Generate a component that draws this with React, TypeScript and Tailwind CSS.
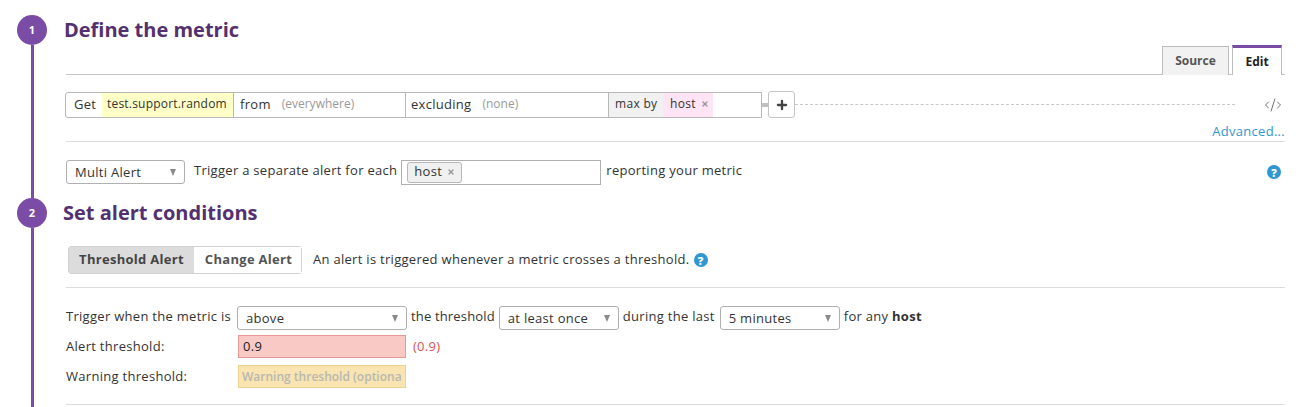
import React from 'react';
import { Plus, X, CodeXml } from 'lucide-react';

const Caret = () => <span className="ml-auto w-0 h-0 border-l-[3.5px] border-r-[3.5px] border-t-[7px] border-l-transparent border-r-transparent border-t-[#8a8a8a]" />;

const Select: React.FC<{ label: string; width: string; pad?: string }> = ({ label, width, pad = 'pl-2 pr-[8px]' }) => (
  <div className={`flex items-center h-6 rounded-[3px] border border-[#b0b0b0] bg-white text-[#333] ${width} ${pad}`}>
    <span className="pt-0.5">{label}</span>
    <Caret />
  </div>
);

const Help = () => (
  <span className="flex items-center justify-center w-[14px] h-[14px] rounded-full bg-[#2f97d1] text-white text-[11px] font-extrabold leading-none tracking-normal">?</span>
);

const StepRail: React.FC<{ n: number }> = ({ n }) => (
  <div className="flex flex-col items-center w-[30px] ml-[17px] mr-[19px] shrink-0">
    <div className="flex items-center justify-center w-[30px] h-[30px] rounded-full bg-[#7b4ca5] text-white text-[11px] font-bold tracking-normal">{n}</div>
    <div className="flex-1 w-[3px] bg-[#7b4ca5]" />
  </div>
);

const Divider: React.FC<{ className: string }> = ({ className }) => <div className={`h-px bg-[#dcdcdc] w-[1219px] ${className}`} />;

const App: React.FC = () => {
  return (
    <div className="w-[1306px] h-[407px] overflow-hidden bg-white text-[13px] tracking-[0.29px] text-[#333] font-['Open_Sans',sans-serif]">
      <div className="flex h-[198px] pt-[15px]">
        <StepRail n={1} />
        <div className="flex-1">
          <h2 className="h-[30px] -ml-[2px] text-[20px] leading-[30px] font-bold tracking-normal text-[#53306f]">Define the metric</h2>

          <div className="flex justify-end gap-[3px] h-[29px] pr-[3px] w-[1216px] border-b border-[#c4c4c4] box-content tracking-normal">
            <div className="flex items-center justify-center w-[67px] h-[29px] mt-px border border-b-0 border-[#bcbcbc] bg-[#f2f2f2] font-bold text-[12px] text-[#555]">Source</div>
            <div className="flex items-center justify-center w-[50px] h-[30px] border-x border-[#bcbcbc] border-t-[3px] border-t-[#7b4ca5] bg-white font-bold text-[12px] text-[#222]">Edit</div>
          </div>

          <div className="flex items-center w-[1220px] mt-[16px] -ml-px">
            <div className="flex h-[26px] w-[697px] rounded-l-[3px] border border-[#b8b8b8] leading-[22px]">
              <span className="w-[36px] pl-2">Get</span>
              <span className="w-[131px] pl-[5px] bg-[#ffffc8] text-[12px] tracking-[0.2px]">test.support.random</span>
              <div className="flex w-[172px] border-l border-[#b8b8b8] pl-[6px]">
                <span>from</span>
                <span className="ml-[11px] text-[12px] tracking-normal text-[#999]">(everywhere)</span>
              </div>
              <div className="flex w-[203px] border-l border-[#b8b8b8] pl-[5px]">
                <span>excluding</span>
                <span className="ml-[11px] text-[12px] tracking-normal text-[#999]">(none)</span>
              </div>
              <span className="w-[55px] pl-[6px] border-l border-[#b8b8b8] bg-[#f1f1f1] text-[12px] tracking-[0.3px]">max by</span>
              <span className="flex items-center gap-[5px] w-[50px] pl-[7px] pb-px bg-[#ffe4f6] text-[12px]">
                host <X size={8} strokeWidth={4} className="text-[#999]" />
              </span>
            </div>
            <div className="w-[6px] h-[4px] bg-[#c0c0c0]" />
            <div className="flex items-center justify-center w-[27px] h-[27px] rounded-[3px] border border-[#c4c4c4] bg-white">
              <Plus size={14} strokeWidth={4} className="text-[#444]" />
            </div>
            <div className="w-[440px] border-t border-dashed border-[#c8c8c8]" />
            <CodeXml size={18} strokeWidth={1.25} className="ml-[29px] text-[#666]" />
          </div>

          <div className="w-[1219px] mt-[4px] text-right text-[#2f97d1] leading-[18px]">Advanced...</div>
          <Divider className="mt-[1px]" />

          <div className="flex items-center w-[1219px] h-[26px] mt-[17px]">
            <Select label="Multi Alert" width="w-[119px]" />
            <span className="ml-[9px] mr-[4px] pb-[2px]">Trigger a separate alert for each</span>
            <div className="flex items-center w-[200px] h-[25px] border border-[#b0b0b0] pl-[5px]">
              <span className="flex items-center gap-[5px] h-[21px] px-[6px] rounded-[3px] border border-[#b8b8b8] bg-[#f0f0f0] text-[#333]">
                host <X size={8} strokeWidth={4} className="text-[#999]" />
              </span>
            </div>
            <span className="ml-[5px] pb-[2px]">reporting your metric</span>
            <span className="ml-auto mr-[4px]"><Help /></span>
          </div>
        </div>
      </div>

      <div className="flex h-[209px]">
        <StepRail n={2} />
        <div className="flex-1">
          <h2 className="h-[30px] -ml-[3px] text-[20px] leading-[30px] font-bold tracking-normal text-[#53306f]">Set alert conditions</h2>

          <div className="flex items-center h-[28px] mt-[18px] ml-[2px]">
            <div className="flex h-full rounded-[3px] border border-[#d2d2d2] font-bold">
              <span className="flex items-center justify-center w-[125px] bg-[#dcdcdc] text-[#444]">Threshold Alert</span>
              <span className="flex items-center justify-center w-[107px] pl-[2px] bg-white text-[#555]">Change Alert</span>
            </div>
            <span className="ml-[11px] mr-[4px]">An alert is triggered whenever a metric crosses a threshold.</span>
            <Help />
          </div>
          <Divider className="mt-[13px]" />

          <div className="flex items-center h-6 mt-[18px]">
            <span className="w-[171px] pb-[2px]">Trigger when the metric is</span>
            <Select label="above" width="w-[170px]" />
            <span className="ml-[4px] mr-[4px] pb-[2px] tracking-[0.16px]">the threshold</span>
            <Select label="at least once" width="w-[120px]" />
            <span className="ml-[4px] mr-[5px] pb-[2px]">during the last</span>
            <Select label="5 minutes" width="w-[120px]" />
            <span className="ml-[4px] pb-[2px]">for any <b>host</b></span>
          </div>

          <div className="flex items-center h-[23px] mt-[5px]">
            <span className="w-[172px]">Alert threshold:</span>
            <div className="w-[168px] h-full pl-[4px] border border-[#e59a95] bg-[#f8c9c5] text-[#222] leading-[21px]">0.9</div>
            <span className="ml-[7px] text-[#d9534f]">(0.9)</span>
          </div>

          <div className="flex items-center h-[23px] mt-[7px]">
            <span className="w-[172px]">Warning threshold:</span>
            <div className="w-[168px] h-full pl-[3px] border border-[#ecd28d] bg-[#f9e4b2] text-[12px] font-semibold tracking-normal text-[#b8b8b0] leading-[21px] whitespace-nowrap">Warning threshold (optiona</div>
          </div>

          <Divider className="mt-[16px]" />
        </div>
      </div>
    </div>
  );
};

export default App;
